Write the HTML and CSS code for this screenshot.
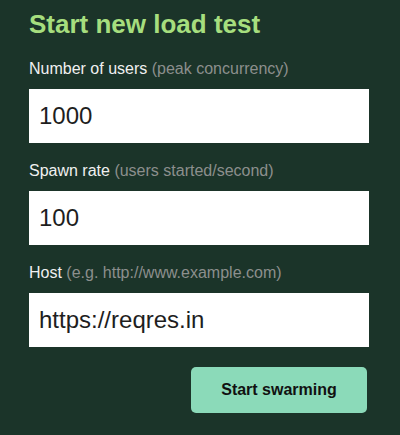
FILE: index.html
```html
<!DOCTYPE html>
<html>
<head>
<meta charset="utf-8">
<link rel="stylesheet" href="styles.css">
</head>
<body>
<form class="panel">
  <h2 class="title">Start new load test</h2>
  <label class="field">
    <span class="label">Number of users <span class="hint">(peak concurrency)</span></span>
    <input class="input" type="text" value="1000">
  </label>
  <label class="field">
    <span class="label">Spawn rate <span class="hint">(users started/second)</span></span>
    <input class="input" type="text" value="100">
  </label>
  <label class="field">
    <span class="label">Host <span class="hint">(e.g. http://www.example.com)</span></span>
    <input class="input" type="text" value="https://reqres.in">
  </label>
  <div class="actions">
    <button class="submit" type="button">Start swarming</button>
  </div>
</form>
</body>
</html>
```
FILE: styles.css
```css
html, body {
  margin: 0;
  padding: 0;
  background: #1b3429;
  width: 400px;
  height: 435px;
  overflow: hidden;
}
.panel {
  padding: 9px 31px 0 29px;
  display: flex;
  flex-direction: column;
  font-family: "Liberation Sans", Arial, sans-serif;
}
.title {
  margin: 0 0 21px 0;
  font-size: 26px;
  line-height: 30px;
  font-weight: bold;
  color: #a6de7e;
}
.field {
  display: flex;
  flex-direction: column;
  gap: 11px;
  margin-bottom: 19px;
}
.label {
  font-size: 16px;
  line-height: 18px;
  color: #f0f0f0;
}
.hint {
  color: #8c8f8d;
}
.input {
  box-sizing: border-box;
  width: 340px;
  height: 54px;
  border: none;
  outline: none;
  margin: 0;
  padding: 0 10px;
  background: #ffffff;
  font-family: "Liberation Sans", Arial, sans-serif;
  font-size: 24px;
  color: #1e1e1e;
}
.actions {
  display: flex;
  justify-content: flex-end;
  padding-right: 2px;
  margin-top: 1px;
}
.submit {
  width: 176px;
  height: 46px;
  border: none;
  border-radius: 5px;
  background: #8bdab9;
  color: #111;
  font-family: "Liberation Sans", Arial, sans-serif;
  font-size: 16px;
  font-weight: bold;
  padding: 0;
}
```
